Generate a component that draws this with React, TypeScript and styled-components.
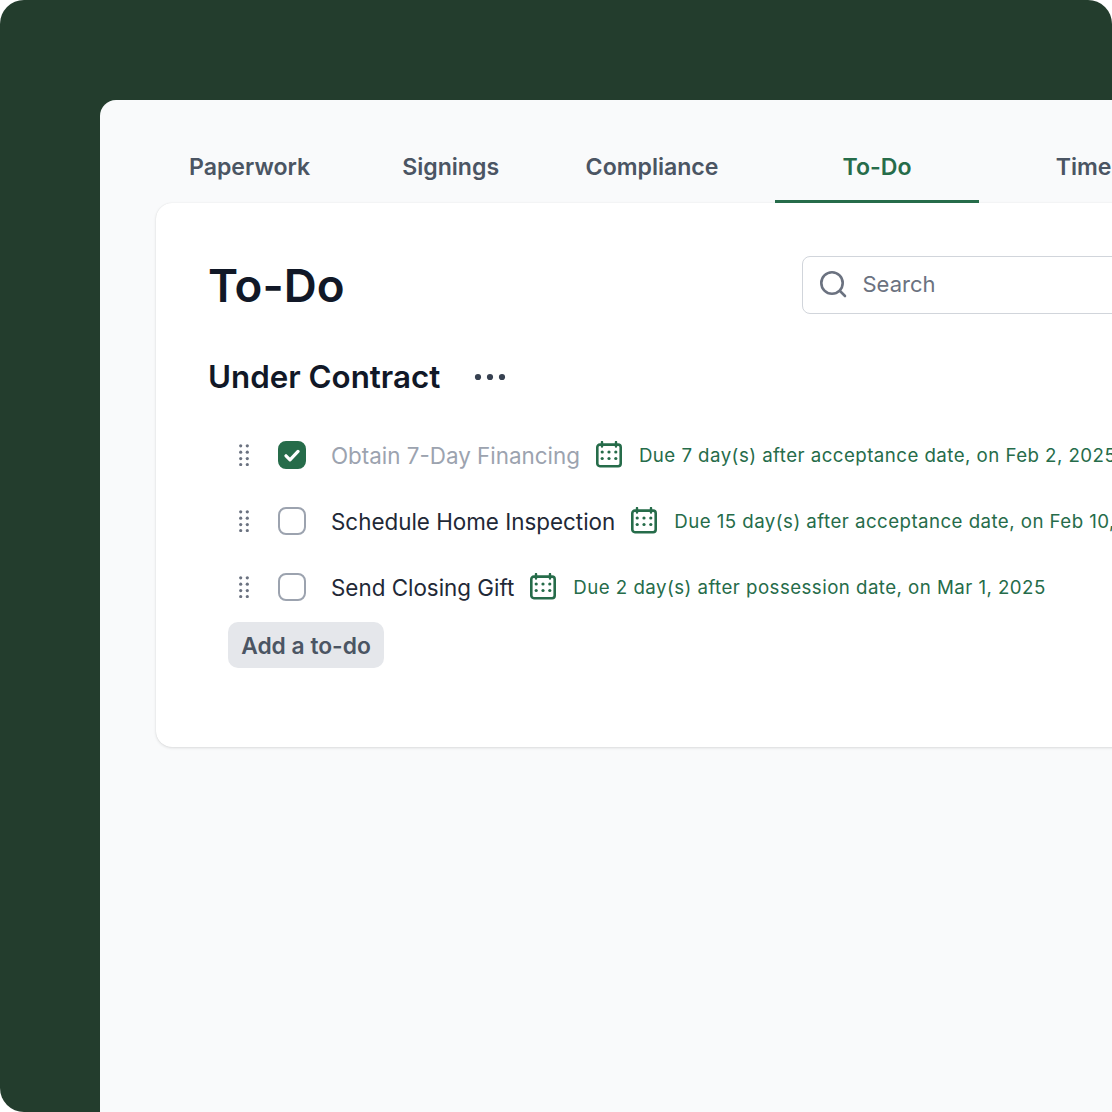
import React from 'react'
import styled, { createGlobalStyle } from 'styled-components'

const GlobalStyle = createGlobalStyle`
  html, body {
    margin: 0;
    padding: 0;
    background: #ffffff;
  }
  body {
    font-family: 'Inter', 'Liberation Sans', sans-serif;
  }
`

const Frame = styled.div`
  width: 1112px;
  height: 1112px;
  box-sizing: border-box;
  padding: 100px 0 0 100px;
  overflow: hidden;
  background: #233d2d;
  border-radius: 24px 24px 0 24px;
`

const Panel = styled.div`
  width: 1100px;
  height: 1012px;
  background: #f9fafb;
  border-radius: 16px 0 0 0;
`

const TabBar = styled.div`
  display: flex;
  height: 103px;
  padding: 0 0 0 27px;
  white-space: nowrap;
`

const Tab = styled.div<{ $active?: boolean; $pad: number }>`
  display: flex;
  align-items: center;
  box-sizing: border-box;
  height: 103px;
  padding: 34px ${(p) => p.$pad}px 0;
  font-size: 23.1px;
  font-weight: 600;
  color: ${(p) => (p.$active ? '#266c4a' : '#4b5563')};
  border-bottom: 3px solid ${(p) => (p.$active ? '#266c4a' : 'transparent')};
  position: relative;
  z-index: 1;
`

const Card = styled.div`
  width: 1100px;
  height: 544px;
  box-sizing: border-box;
  margin-left: 56px;
  padding: 53px 0 0 52px;
  background: #ffffff;
  border-radius: 16px 0 0 16px;
  box-shadow: 0 1px 3px rgba(0, 0, 0, 0.12), 0 0 1px rgba(0, 0, 0, 0.1);
`

const Header = styled.div`
  display: flex;
  align-items: center;
  gap: 458px;
  height: 58px;
`

const Title = styled.h1`
  margin: 0;
  font-size: 45.7px;
  font-weight: 600;
  color: #111827;
  white-space: nowrap;
`

const SearchBox = styled.div`
  display: flex;
  align-items: center;
  gap: 15px;
  flex: none;
  width: 500px;
  height: 58px;
  box-sizing: border-box;
  padding: 0 0 2px 16px;
  border: 1.5px solid #d1d5db;
  border-radius: 8px;
  font-size: 22px;
  color: #6b7280;
`

const SectionHead = styled.div`
  display: flex;
  align-items: center;
  gap: 34px;
  margin-top: 44px;
`

const SectionTitle = styled.h2`
  margin: 0;
  font-size: 31.3px;
  font-weight: 600;
  color: #111827;
  white-space: nowrap;
`

const List = styled.div`
  display: flex;
  flex-direction: column;
  margin-top: 26px;
  padding-left: 20px;
`

const Row = styled.div`
  display: flex;
  align-items: center;
  height: 66px;
  white-space: nowrap;
`

const Handle = styled.svg`
  flex: none;
  margin-left: 11px;
  margin-right: 29px;
`

const Check = styled.div<{ $done?: boolean }>`
  display: flex;
  align-items: center;
  justify-content: center;
  flex: none;
  width: 28px;
  height: 28px;
  box-sizing: border-box;
  border-radius: 8px;
  border: 2.6px solid ${(p) => (p.$done ? '#266c4a' : '#9ca3af')};
  background: ${(p) => (p.$done ? '#266c4a' : '#ffffff')};
  margin-right: 25px;
`

const Name = styled.span<{ $done?: boolean }>`
  font-size: 22.4px;
  color: ${(p) => (p.$done ? '#9ca3af' : '#1f2937')};
  margin-right: 16px;
`

const Due = styled.span`
  font-size: 18.7px;
  letter-spacing: 0.45px;
  color: #266c4a;
  margin-left: 17px;
`

const AddButton = styled.button`
  display: block;
  width: 156px;
  height: 46px;
  margin-top: 2px;
  padding: 0;
  border: 0;
  border-radius: 10px;
  background: #e5e7eb;
  color: #4b5563;
  font-family: inherit;
  font-size: 22.8px;
  font-weight: 600;
  white-space: nowrap;
`

const CalendarSvg = styled.svg`
  flex: none;
`

const SearchIcon = () => (
  <svg width="28" height="28" viewBox="0 0 28 28" fill="none" stroke="#6b7280" strokeWidth="2.6" strokeLinecap="round">
    <circle cx="13" cy="13" r="10.7" />
    <path d="M21 21l5 5" />
  </svg>
)

const MoreIcon = () => (
  <svg width="32" height="8" viewBox="0 0 32 8" fill="#374151">
    <circle cx="4" cy="4" r="3.1" />
    <circle cx="16" cy="4" r="3.1" />
    <circle cx="28" cy="4" r="3.1" />
  </svg>
)

const CalendarIcon = () => (
  <CalendarSvg width="26" height="28" viewBox="0 0 26 28" fill="none">
    <rect x="1.3" y="3.6" width="23.4" height="21.6" rx="2.6" stroke="#266c4a" strokeWidth="2.6" />
    <path d="M6 1v4.5M20 1v4.5" stroke="#266c4a" strokeWidth="2.4" strokeLinecap="round" />
    <g fill="#266c4a">
      {[11, 17.5].map((y) =>
        [6.2, 13, 19.8].map((x) => <circle key={`${x}-${y}`} cx={x} cy={y} r="1.6" />)
      )}
    </g>
  </CalendarSvg>
)

const DragDots = () => (
  <Handle width="10" height="22" viewBox="0 0 10 22" fill="#6b7280">
    {[1.8, 8.2, 14.6, 20.6].map((y) => (
      <React.Fragment key={y}>
        <circle cx="1.7" cy={y} r="1.6" />
        <circle cx="8.3" cy={y} r="1.6" />
      </React.Fragment>
    ))}
  </Handle>
)

const todos = [
  { name: 'Obtain 7-Day Financing', due: 'Due 7 day(s) after acceptance date, on Feb 2, 2025', done: true },
  { name: 'Schedule Home Inspection', due: 'Due 15 day(s) after acceptance date, on Feb 10, 2025', done: false },
  { name: 'Send Closing Gift', due: 'Due 2 day(s) after possession date, on Mar 1, 2025', done: false },
]

const App = () => (
  <>
    <GlobalStyle />
    <Frame>
      <Panel>
        <TabBar>
          <Tab $pad={62}>Paperwork</Tab>
          <Tab $pad={30}>Signings</Tab>
          <Tab $pad={56.5}>Compliance</Tab>
          <Tab $pad={67.6} $active>To-Do</Tab>
          <Tab $pad={76.5}>Timeline</Tab>
        </TabBar>
        <Card>
          <Header>
            <Title>To-Do</Title>
            <SearchBox>
              <SearchIcon />
              <span>Search</span>
            </SearchBox>
          </Header>
          <SectionHead>
            <SectionTitle>Under Contract</SectionTitle>
            <MoreIcon />
          </SectionHead>
          <List>
            {todos.map((t) => (
              <Row key={t.name}>
                <DragDots />
                <Check $done={t.done}>
                  {t.done && (
                    <svg width="16" height="13" viewBox="0 0 16 13" fill="none" stroke="#fff" strokeWidth="3.2" strokeLinecap="round" strokeLinejoin="round">
                      <path d="M2 6.8l4 4L14 2.4" />
                    </svg>
                  )}
                </Check>
                <Name $done={t.done}>{t.name}</Name>
                <CalendarIcon />
                <Due>{t.due}</Due>
              </Row>
            ))}
            <AddButton>Add a to-do</AddButton>
          </List>
        </Card>
      </Panel>
    </Frame>
  </>
)

export default App
